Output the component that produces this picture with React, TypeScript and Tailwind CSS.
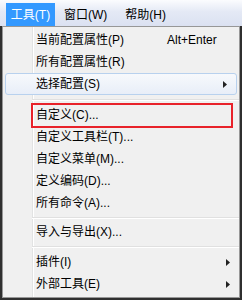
import React from 'react';

const font = "font-['Liberation_Sans','Noto_Sans_CJK_SC',sans-serif]";

function Arrow() {
  return (
    <svg className="ml-auto mr-[9px]" width="4" height="7" viewBox="0 0 4 7">
      <path d="M0 0 L4 3.5 L0 7 Z" fill="#222" />
    </svg>
  );
}

function Item({ label, shortcut, sub }: { label: string; shortcut?: string; sub?: boolean }) {
  return (
    <div className="h-[22px] flex items-center pl-[33px]">
      <span className={shortcut ? 'w-[131px]' : ''}>{label}</span>
      {shortcut && <span>{shortcut}</span>}
      {sub && <Arrow />}
    </div>
  );
}

function Sep({ h }: { h: string }) {
  return (
    <div className={`${h} flex flex-col justify-center pl-[29px]`}>
      <div className="h-px bg-[#e0e0e0]" />
      <div className="h-px bg-white" />
    </div>
  );
}

export default function App() {
  return (
    <div className={`w-[242px] h-[300px] bg-[#2f2f2f] relative overflow-hidden text-[12px] leading-none text-black ${font}`}>
      {/* menu bar */}
      <div className="h-[26px] flex items-end bg-[linear-gradient(to_bottom,#fbfcfe,#e4e9f5_45%,#dbe1f1)]">
        <div className="ml-[6px] h-[23px] w-[49px] flex items-center justify-center bg-[#3399ff] text-white">工具(T)</div>
        <div className="ml-[9px] h-[23px] flex items-center">窗口(W)</div>
        <div className="ml-[18px] h-[23px] flex items-center">帮助(H)</div>
      </div>

      {/* dropdown */}
      <div className="ml-[2px] w-[238px] h-[272px] border border-[#979797] bg-[#f0f0f0] bg-[linear-gradient(to_right,transparent_29px,#e2e3e3_29px,#e2e3e3_30px,#ffffff_30px,#ffffff_31px,transparent_31px)] pt-[2px] pb-[2px]">
        <Item label="当前配置属性(P)" shortcut="Alt+Enter" />
        <Item label="所有配置属性(R)" />
        <div className="mx-[2px] h-[22px] flex items-center pl-[30px] rounded-[3px] border border-[#b8d1ee] bg-[linear-gradient(to_bottom,#f7f9fc,#e8eef8)]">
          <span>选择配置(S)</span>
          <Arrow />
        </div>
        <Sep h="h-[9px]" />
        <Item label="自定义(C)..." />
        <Item label="自定义工具栏(T)..." />
        <Item label="自定义菜单(M)..." />
        <Item label="定义编码(D)..." />
        <Item label="所有命令(A)..." />
        <Sep h="h-[7px]" />
        <Item label="导入与导出(X)..." />
        <Sep h="h-[8px]" />
        <Item label="插件(I)" sub />
        <Item label="外部工具(E)" sub />
      </div>

      {/* red annotation box */}
      <div className="absolute left-[31px] top-[103px] w-[202px] h-[25px] border-2 border-[#e8222a]" />
    </div>
  );
}
